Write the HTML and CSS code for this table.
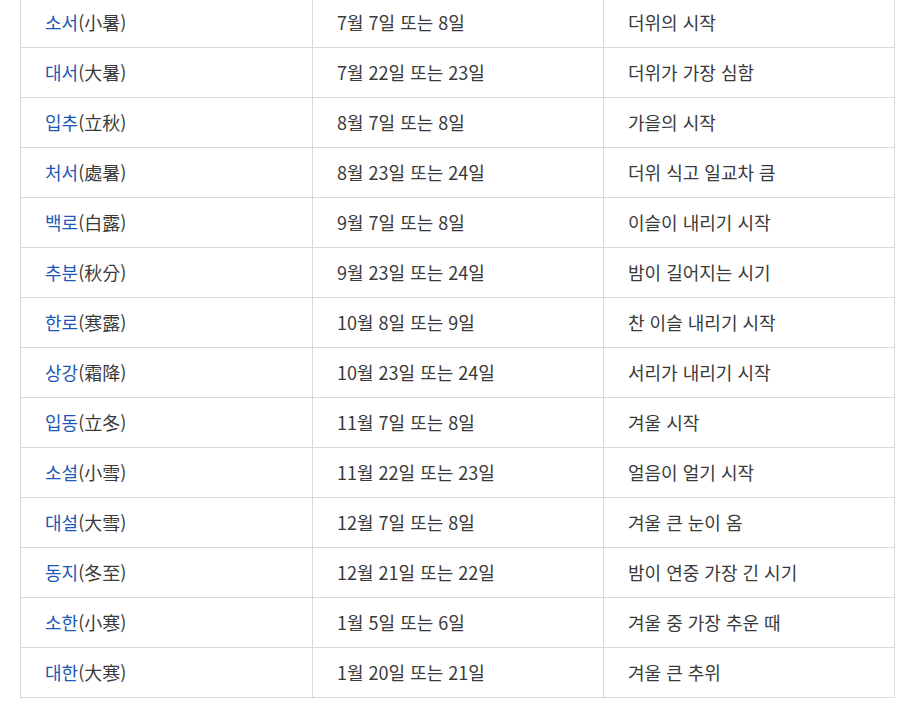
FILE: index.html
```html
<!DOCTYPE html>
<html lang="ko">
<head>
<meta charset="utf-8">
<link rel="stylesheet" href="styles.css">
</head>
<body>
<table class="terms">
<colgroup><col class="c1"><col class="c2"><col class="c3"></colgroup>
<tbody>
<tr><td><a href="#">소서</a>(小暑)</td><td>7월 7일 또는 8일</td><td>더위의 시작</td></tr>
<tr><td><a href="#">대서</a>(大暑)</td><td>7월 22일 또는 23일</td><td>더위가 가장 심함</td></tr>
<tr><td><a href="#">입추</a>(立秋)</td><td>8월 7일 또는 8일</td><td>가을의 시작</td></tr>
<tr><td><a href="#">처서</a>(處暑)</td><td>8월 23일 또는 24일</td><td>더위 식고 일교차 큼</td></tr>
<tr><td><a href="#">백로</a>(白露)</td><td>9월 7일 또는 8일</td><td>이슬이 내리기 시작</td></tr>
<tr><td><a href="#">추분</a>(秋分)</td><td>9월 23일 또는 24일</td><td>밤이 길어지는 시기</td></tr>
<tr><td><a href="#">한로</a>(寒露)</td><td>10월 8일 또는 9일</td><td>찬 이슬 내리기 시작</td></tr>
<tr><td><a href="#">상강</a>(霜降)</td><td>10월 23일 또는 24일</td><td>서리가 내리기 시작</td></tr>
<tr><td><a href="#">입동</a>(立冬)</td><td>11월 7일 또는 8일</td><td>겨울 시작</td></tr>
<tr><td><a href="#">소설</a>(小雪)</td><td>11월 22일 또는 23일</td><td>얼음이 얼기 시작</td></tr>
<tr><td><a href="#">대설</a>(大雪)</td><td>12월 7일 또는 8일</td><td>겨울 큰 눈이 옴</td></tr>
<tr><td><a href="#">동지</a>(冬至)</td><td>12월 21일 또는 22일</td><td>밤이 연중 가장 긴 시기</td></tr>
<tr><td><a href="#">소한</a>(小寒)</td><td>1월 5일 또는 6일</td><td>겨울 중 가장 추운 때</td></tr>
<tr><td><a href="#">대한</a>(大寒)</td><td>1월 20일 또는 21일</td><td>겨울 큰 추위</td></tr>
</tbody>
</table>
</body>
</html>
```
FILE: styles.css
```css
html, body {
  margin: 0;
  padding: 0;
  background: #ffffff;
}
body {
  padding-left: 20px;
  font-family: "Noto Sans CJK KR", "Noto Sans", sans-serif;
  color: #3a3a3a;
}
.terms {
  margin-top: -3px;
  width: 874px;
  border-collapse: collapse;
  table-layout: fixed;
}
.terms .c1 { width: 292px; }
.terms .c2 { width: 291px; }
.terms .c3 { width: 291px; }
.terms td {
  height: 48px;
  padding: 0 0 1px 24px;
  border: 1px solid #d9d9dd;
  font-size: 18px;
  line-height: 24px;
  vertical-align: middle;
  white-space: nowrap;
}
.terms a {
  color: #1c58b8;
  text-decoration: none;
}
```
